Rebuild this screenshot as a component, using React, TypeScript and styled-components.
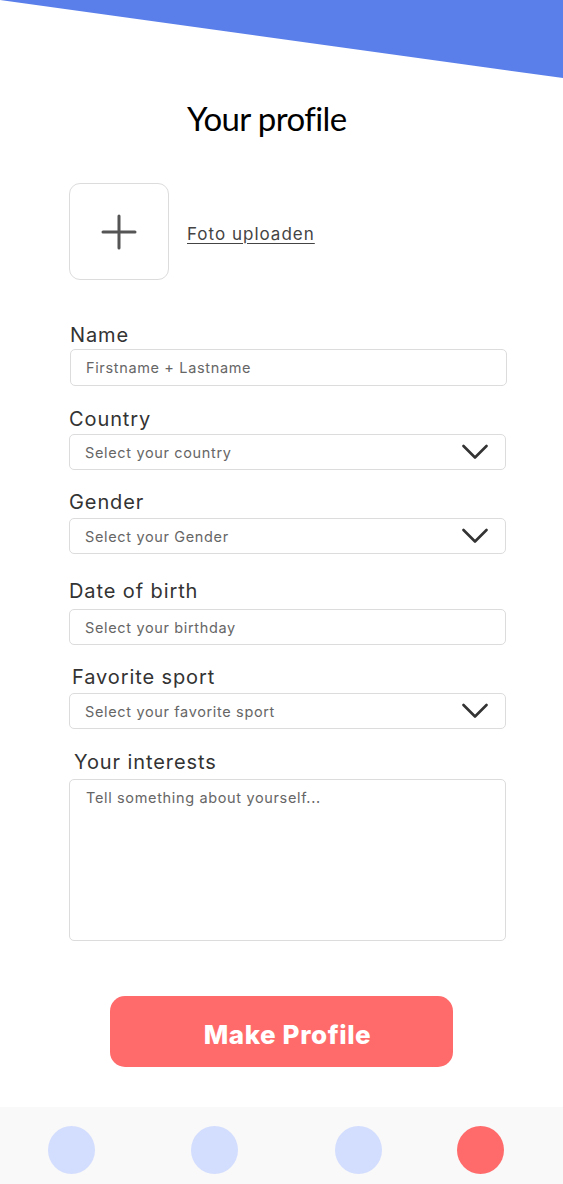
import React from "react";
import styled, { createGlobalStyle } from "styled-components";

const Global = createGlobalStyle`
  html, body { margin: 0; padding: 0; background: #fff; }
  body { font-family: Inter, "Open Sans", sans-serif; }
  * { box-sizing: border-box; }
`;

const Page = styled.div`
  width: 563px;
  height: 1184px;
  position: relative;
  overflow: hidden;
  display: flex;
  flex-direction: column;
  background: #fff;
`;

const Banner = styled.svg`
  position: absolute;
  top: 0;
  left: 0;
`;

const Title = styled.h1`
  margin: 96px 0 0;
  padding-left: 187px;
  font-family: Lato, sans-serif;
  font-weight: 400;
  font-size: 33px;
  line-height: 44px;
  color: #000;
  letter-spacing: -0.6px;
`;

const PhotoRow = styled.div`
  display: flex;
  align-items: center;
  gap: 18px;
  margin: 43px 0 0 69px;
`;

const PhotoBox = styled.div`
  width: 100px;
  height: 97px;
  border: 1.5px solid #dcdcdc;
  border-radius: 11px;
  display: flex;
  align-items: center;
  justify-content: center;
`;

const UploadLink = styled.a`
  font-family: Inter, sans-serif;
  font-size: 17px;
  letter-spacing: 1px;
  color: #444;
  text-decoration: underline;
  text-underline-offset: 3px;
  text-decoration-thickness: 1px;
  margin-top: 4px;
`;

const Form = styled.div`
  display: flex;
  flex-direction: column;
  padding-left: 69px;
  margin-top: 43px;
`;

const Field = styled.div<{ $top: number }>`
  display: flex;
  flex-direction: column;
  margin-top: ${(p) => p.$top}px;
`;

const Label = styled.label<{ $indent: number; $gap: number }>`
  font-family: Inter, sans-serif;
  font-size: 20px;
  line-height: 24px;
  letter-spacing: 0.9px;
  color: #333;
  padding-left: ${(p) => p.$indent}px;
  margin-bottom: ${(p) => p.$gap}px;
`;

const InputBox = styled.div<{ $shift?: number; $height?: number; $alignTop?: boolean }>`
  width: 437px;
  height: ${(p) => p.$height ?? 37}px;
  margin-left: ${(p) => p.$shift ?? 0}px;
  border: 1.5px solid #dcdcdc;
  border-radius: 5px;
  display: flex;
  align-items: ${(p) => (p.$alignTop ? "flex-start" : "center")};
  justify-content: space-between;
  padding: ${(p) => (p.$alignTop ? "9px 16px" : "0 17px 0 15px")};
`;

const Placeholder = styled.span`
  font-family: Inter, sans-serif;
  font-size: 14.5px;
  letter-spacing: 0.65px;
  color: #666;
`;

const ButtonWrap = styled.div`
  display: flex;
  padding-left: 110px;
  margin-top: 55px;
`;

const MakeButton = styled.button`
  width: 343px;
  height: 71px;
  border: none;
  border-radius: 15px;
  background: #ff6b6b;
  color: #fff;
  font-family: Inter, sans-serif;
  font-weight: 800;
  font-size: 26px;
  letter-spacing: 0.6px;
  padding: 5px 0 0 12px;
`;

const Dots = styled.div`
  display: flex;
  align-items: center;
  height: 77px;
  background: #f9f9f9;
  margin-top: auto;
  padding: 8px 0 0 48px;
`;

const Dot = styled.div<{ $active?: boolean; $gapLeft: number }>`
  width: 47px;
  height: 48px;
  border-radius: 50%;
  background: ${(p) => (p.$active ? "#ff6b6b" : "#d3ddfe")};
  margin-left: ${(p) => p.$gapLeft}px;
`;

const Chevron = () => (
  <svg width="26" height="16" viewBox="0 0 26 16" fill="none">
    <path d="M1.5 2 L13 13.5 L24.5 2" stroke="#333" strokeWidth="2.6" strokeLinecap="round" strokeLinejoin="round" />
  </svg>
);

const Plus = () => (
  <svg width="36" height="36" viewBox="0 0 36 36">
    <path d="M18 2 V34 M2 18 H34" stroke="#555" strokeWidth="3" strokeLinecap="round" />
  </svg>
);

type F = {
  label: string;
  ph: string;
  top: number;
  indent: number;
  gap: number;
  shift?: number;
  select?: boolean;
  height?: number;
  area?: boolean;
};

const fields: F[] = [
  { label: "Name", ph: "Firstname + Lastname", top: 0, indent: 1, gap: 2, shift: 1 },
  { label: "Country", ph: "Select your country", top: 21, indent: 0, gap: 3, select: true, height: 36 },
  { label: "Gender", ph: "Select your Gender", top: 20, indent: 0, gap: 4, select: true, height: 36 },
  { label: "Date of birth", ph: "Select your birthday", top: 25, indent: 0, gap: 6, height: 36 },
  { label: "Favorite sport", ph: "Select your favorite sport", top: 20, indent: 3, gap: 4, select: true, height: 36 },
  { label: "Your interests", ph: "Tell something about yourself...", top: 21, indent: 5, gap: 5, height: 162, area: true },
];

export default function App() {
  return (
    <Page>
      <Global />
      <Banner width="563" height="80" viewBox="0 0 563 80">
        <polygon points="0,0 563,0 563,78" fill="#5a7fea" />
      </Banner>
      <Title>Your profile</Title>
      <PhotoRow>
        <PhotoBox>
          <Plus />
        </PhotoBox>
        <UploadLink>Foto uploaden</UploadLink>
      </PhotoRow>
      <Form>
        {fields.map((f) => (
          <Field key={f.label} $top={f.top}>
            <Label $indent={f.indent} $gap={f.gap}>{f.label}</Label>
            <InputBox $shift={f.shift} $height={f.height} $alignTop={f.area}>
              <Placeholder>{f.ph}</Placeholder>
              {f.select && <Chevron />}
            </InputBox>
          </Field>
        ))}
      </Form>
      <ButtonWrap>
        <MakeButton>Make Profile</MakeButton>
      </ButtonWrap>
      <Dots>
        <Dot $gapLeft={0} />
        <Dot $gapLeft={96} />
        <Dot $gapLeft={97} />
        <Dot $gapLeft={75} $active />
      </Dots>
    </Page>
  );
}
